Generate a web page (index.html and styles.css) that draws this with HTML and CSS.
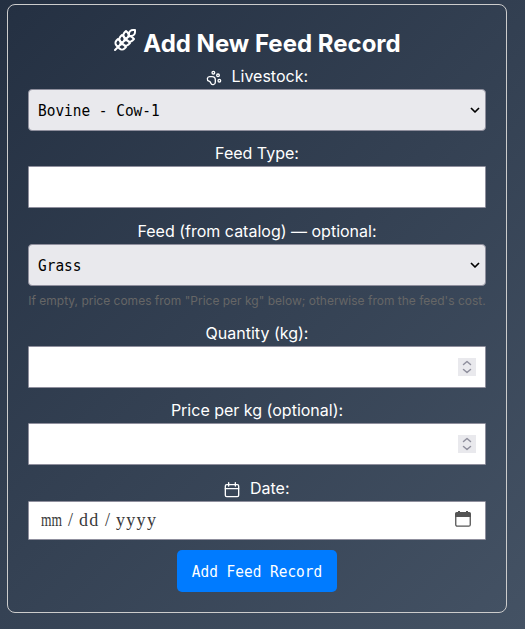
FILE: index.html
```html
<!DOCTYPE html>
<html lang="en">
<head>
<meta charset="utf-8">
<title>Add New Feed Record</title>
<link rel="stylesheet" href="styles.css">
</head>
<body>
<form class="card">
  <h2 class="title">
    <svg class="wheat" viewBox="0 0 24 24"><path d="M2 22 16 8M3.47 12.53 5 11l1.53 1.53a3.5 3.5 0 0 1 0 4.94L5 19l-1.53-1.53a3.5 3.5 0 0 1 0-4.94ZM7.47 8.53 9 7l1.53 1.53a3.5 3.5 0 0 1 0 4.94L9 15l-1.53-1.53a3.5 3.5 0 0 1 0-4.94ZM11.47 4.53 13 3l1.53 1.53a3.5 3.5 0 0 1 0 4.94L13 11l-1.53-1.53a3.5 3.5 0 0 1 0-4.94ZM20 2h2v2a4 4 0 0 1-4 4h-2V6a4 4 0 0 1 4-4ZM11.47 17.47 13 19l-1.53 1.53a3.5 3.5 0 0 1-4.94 0L5 19l1.53-1.53a3.5 3.5 0 0 1 4.94 0ZM15.47 13.47 17 15l-1.53 1.53a3.5 3.5 0 0 1-4.94 0L9 15l1.53-1.53a3.5 3.5 0 0 1 4.94 0ZM19.47 9.47 21 11l-1.53 1.53a3.5 3.5 0 0 1-4.94 0L13 11l1.53-1.53a3.5 3.5 0 0 1 4.94 0Z"/></svg>
    <span>Add New Feed Record</span>
  </h2>
  <div class="label">
    <svg class="paw" viewBox="0 0 24 24"><circle cx="11" cy="4" r="2"/><circle cx="18" cy="8" r="2"/><circle cx="20" cy="16" r="2"/><path d="M9 10a5 5 0 0 1 5 5v3.5a3.5 3.5 0 0 1-6.84 1.045Q6.52 17.48 4.46 16.84A3.5 3.5 0 0 1 5.5 10Z"/></svg>
    <span>Livestock:</span>
  </div>
  <div class="field select snug"><span class="mono">Bovine - Cow-1</span><svg class="chevron" viewBox="0 0 10 6"><path d="M1 1l4 4 4-4"/></svg></div>
  <div class="label">Feed Type:</div>
  <div class="field"></div>
  <div class="label">Feed (from catalog) — optional:</div>
  <div class="field select catalog"><span class="mono">Grass</span><svg class="chevron" viewBox="0 0 10 6"><path d="M1 1l4 4 4-4"/></svg></div>
  <div class="hint">If empty, price comes from "Price per kg" below; otherwise from the feed's cost.</div>
  <div class="label">Quantity (kg):</div>
  <div class="field number snug"><svg class="spinner" viewBox="0 0 18 18"><path d="M5.5 6.5 9 3.5l3.5 3M5.5 11.5l3.5 3 3.5-3"/></svg></div>
  <div class="label">Price per kg (optional):</div>
  <div class="field number"><svg class="spinner" viewBox="0 0 18 18"><path d="M5.5 6.5 9 3.5l3.5 3M5.5 11.5l3.5 3 3.5-3"/></svg></div>
  <div class="label">
    <svg class="calendar" viewBox="0 0 24 24"><path d="M7 1v5M17 1v5M2 10h20"/><rect x="2" y="4" width="20" height="18" rx="2"/></svg>
    <span>Date:</span>
  </div>
  <div class="field date">
    <span class="segments"><span class="month">mm</span><span class="slash">/</span><span class="day">dd</span><span class="slash">/</span><span>yyyy</span></span>
    <svg class="picker" viewBox="0 0 16 16"><path class="solid" d="M0 6V3q0-2 2-2h1V0h2v1h6V0h2v1h1q2 0 2 2v3z"/><rect x=".75" y="2" width="14.5" height="13.2" rx="1.5"/></svg>
  </div>
  <button class="submit" type="button"><span class="mono">Add Feed Record</span></button>
</form>
</body>
</html>
```

FILE: styles.css
```css
* { box-sizing: border-box; }
html { height: 100%; }
body {
  margin: 0;
  height: 629px;
  padding: 4px 18px 16px 7px;
  background: linear-gradient(135deg, #243042, #445264);
  color: #fff;
  font: 16px/20px Inter, sans-serif;
}
.card {
  height: 609px;
  padding: 20px;
  border: 1px solid #ccc;
  border-radius: 8px;
  display: flex;
  flex-direction: column;
}
svg { fill: none; stroke: currentColor; stroke-linecap: round; stroke-linejoin: round; flex: none; }
.title {
  margin: 4px 0 8px;
  height: 29px;
  display: flex;
  justify-content: center;
  align-items: center;
  gap: 6px;
  font-size: 24px;
  line-height: 29px;
  font-weight: 700;
}
.wheat { width: 24px; height: 24px; stroke-width: 2; margin-top: -7px; }
.label {
  height: 23px;
  flex: none;
  line-height: 20px;
  display: flex;
  justify-content: center;
  gap: 9.5px;
}
.paw, .calendar { width: 16px; height: 16px; margin-top: 4px; stroke-width: 2; }
.field {
  height: 42px;
  margin-bottom: 13px;
  flex: none;
  border: 1px solid #8f8f9d;
  border-radius: 1px;
  background: #fff;
  color: #000;
  display: flex;
  align-items: center;
  justify-content: space-between;
}
.snug { margin-bottom: 12px; }
.select {
  background: #e9e9ed;
  border-radius: 4px;
  padding: 0 5px 0 9px;
}
.mono {
  display: inline-block;
  font: 14.45px/20px "DejaVu Sans Mono", monospace;
  transform: scaleY(1.12);
}
.chevron { width: 10px; height: 6px; stroke-width: 1.7; stroke-linecap: butt; }
.catalog { margin-bottom: 7px; }
.hint {
  height: 16px;
  flex: none;
  margin-bottom: 14px;
  color: #666;
  font-size: 12px;
  line-height: 16px;
  text-align: center;
  white-space: nowrap;
}
.number { justify-content: flex-end; padding-right: 9px; }
.spinner { width: 18px; height: 18px; background: #e9e9ed; color: #8f8f9d; stroke-width: 1.5; }
.date { height: 39px; margin-bottom: 10px; padding: 0 14px 0 12px; }
.segments {
  display: flex;
  margin-top: -2px;
  color: #3a3a3a;
  font: 18px/20px "Liberation Serif", serif;
  letter-spacing: 1.3px;
}
.month { width: 24px; letter-spacing: 0; transform: scaleX(.75); transform-origin: left; }
.slash { width: 14px; padding-left: 3px; }
.day { width: 23px; }
.picker { width: 16px; height: 16px; color: #555; stroke-width: 1.3; margin-top: -3px; }
.picker .solid { fill: currentColor; stroke: none; }
.submit {
  align-self: center;
  flex: none;
  width: 160px;
  height: 42px;
  padding: 0;
  border: 0;
  border-radius: 5px;
  background: #007bff;
  color: #fff;
}
```
